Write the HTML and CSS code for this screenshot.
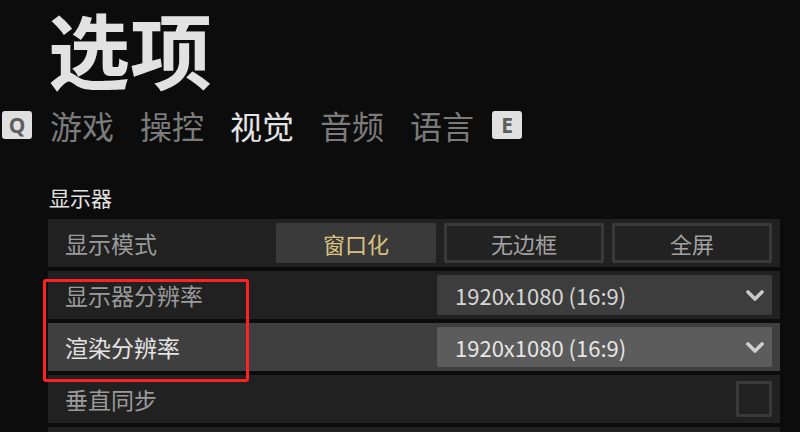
FILE: index.html
```html
<!DOCTYPE html>
<html lang="zh-CN">
<head>
  <meta charset="UTF-8">
  <meta name="viewport" content="width=device-width, initial-scale=1.0">
  <title>选项</title>
  <link rel="stylesheet" href="styles.css">
</head>
<body>
  <div id="page">
    <h1 class="title">选项</h1>

    <div class="tabs">
      <span class="key">Q</span>
      <div class="tab-list">
        <span class="tab">游戏</span>
        <span class="tab">操控</span>
        <span class="tab active">视觉</span>
        <span class="tab">音频</span>
        <span class="tab">语言</span>
      </div>
      <span class="key">E</span>
    </div>

    <div class="section">
      <h2 class="section-title">显示器</h2>
      <div class="rows">
        <div class="row">
          <span class="label">显示模式</span>
          <div class="choices">
            <button class="choice selected">窗口化</button>
            <button class="choice">无边框</button>
            <button class="choice">全屏</button>
          </div>
        </div>
        <div class="row">
          <span class="label">显示器分辨率</span>
          <div class="select">
            <span>1920x1080 (16:9)</span>
            <svg class="chevron" width="18" height="13" viewBox="0 0 18 13"><path d="M2 3 L9 10 L16 3" fill="none" stroke="#c8c8c8" stroke-width="3.6" stroke-linecap="round" stroke-linejoin="round"/></svg>
          </div>
        </div>
        <div class="row hover">
          <span class="label">渲染分辨率</span>
          <div class="select">
            <span>1920x1080 (16:9)</span>
            <svg class="chevron" width="18" height="13" viewBox="0 0 18 13"><path d="M2 3 L9 10 L16 3" fill="none" stroke="#cfcfcf" stroke-width="3.6" stroke-linecap="round" stroke-linejoin="round"/></svg>
          </div>
        </div>
        <div class="row">
          <span class="label">垂直同步</span>
          <span class="checkbox"></span>
        </div>
        <div class="row">
          <span class="label">帧率上限</span>
        </div>
      </div>
    </div>

    <div class="mark"></div>
  </div>
</body>
</html>
```

FILE: styles.css
```css
body { margin: 0; background: #0c0c0c; font-family: "Noto Sans CJK SC", "Noto Sans", sans-serif; color: #e0e0e0; overflow: hidden; }
#page { position: relative; width: 800px; height: 432px; overflow: hidden; }

.title { margin: 0; padding: 0 0 0 48px; font-size: 82px; line-height: 96px; font-weight: 700; color: #e2e2e2; }

.tabs { display: flex; align-items: center; gap: 18px; margin: 13px 0 0 2px; height: 32px; }
.tab-list { display: flex; gap: 26px; }
.tab { font-size: 32px; line-height: 32px; color: #7b7b7b; }
.tab.active { color: #e4e4e4; }
.key { width: 30px; height: 28px; display: flex; align-items: center; justify-content: center; background: #e0e0e0; color: #5e5e5e; border-radius: 3px; font-family: "Noto Sans", sans-serif; font-weight: 700; font-size: 21px; line-height: 28px; }

.section { margin: 44px 20px 0 48px; }
.section-title { margin: 0 0 10px 1px; font-size: 21px; line-height: 24px; font-weight: 400; color: #e2e2e2; }

.rows { display: flex; flex-direction: column; gap: 4px; }
.row { height: 48px; display: flex; align-items: center; justify-content: space-between; padding: 0 8px 0 17px; background: #212121; }
.row.hover { background: #3f3f3f; }
.label { font-size: 23px; color: #9a9a9a; }
.row.hover .label { color: #e4e4e4; }

.choices { display: flex; gap: 8px; }
.choice { width: 160px; height: 40px; box-sizing: border-box; border: 3px solid #3a3a3a; background: #222; color: #a2a2a2; font-family: inherit; font-size: 22px; border-radius: 2px; padding: 0; }
.choice.selected { background: #3a3a3a; color: #dcc27e; }

.select { width: 335px; height: 40px; box-sizing: border-box; display: flex; align-items: center; justify-content: space-between; padding: 0 8px 0 18px; background: #3d3d3d; border-radius: 2px; font-size: 22px; color: #d6d6d6; }
.row.hover .select { background: #5c5c5c; color: #e6e6e6; }

.checkbox { width: 36px; height: 36px; box-sizing: border-box; border: 3px solid #3a3a3a; border-radius: 2px; }

.mark { position: absolute; left: 43px; top: 279px; width: 206px; height: 103px; box-sizing: border-box; border: 3px solid #ff2222; border-radius: 3px; }
```
